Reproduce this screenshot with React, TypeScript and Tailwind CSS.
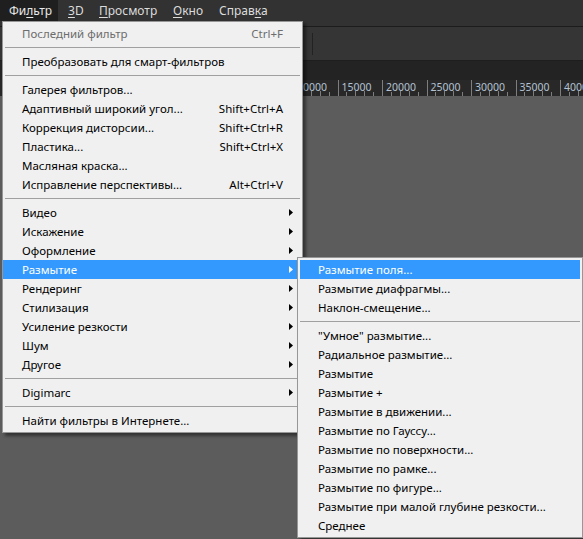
import React from "react";

type Item =
  | { type: "sep" }
  | { type: "item"; label: string; shortcut?: string; sub?: boolean; disabled?: boolean; active?: boolean };

const mainItems: Item[] = [
  { type: "item", label: "Последний фильтр", shortcut: "Ctrl+F", disabled: true },
  { type: "sep" },
  { type: "item", label: "Преобразовать для смарт-фильтров" },
  { type: "sep" },
  { type: "item", label: "Галерея фильтров..." },
  { type: "item", label: "Адаптивный широкий угол...", shortcut: "Shift+Ctrl+A" },
  { type: "item", label: "Коррекция дисторсии...", shortcut: "Shift+Ctrl+R" },
  { type: "item", label: "Пластика...", shortcut: "Shift+Ctrl+X" },
  { type: "item", label: "Масляная краска..." },
  { type: "item", label: "Исправление перспективы...", shortcut: "Alt+Ctrl+V" },
  { type: "sep" },
  { type: "item", label: "Видео", sub: true },
  { type: "item", label: "Искажение", sub: true },
  { type: "item", label: "Оформление", sub: true },
  { type: "item", label: "Размытие", sub: true, active: true },
  { type: "item", label: "Рендеринг", sub: true },
  { type: "item", label: "Стилизация", sub: true },
  { type: "item", label: "Усиление резкости", sub: true },
  { type: "item", label: "Шум", sub: true },
  { type: "item", label: "Другое", sub: true },
  { type: "sep" },
  { type: "item", label: "Digimarc", sub: true },
  { type: "sep" },
  { type: "item", label: "Найти фильтры в Интернете..." },
];

const subItems: Item[] = [
  { type: "item", label: "Размытие поля...", active: true },
  { type: "item", label: "Размытие диафрагмы..." },
  { type: "item", label: "Наклон-смещение..." },
  { type: "sep" },
  { type: "item", label: "\"Умное\" размытие..." },
  { type: "item", label: "Радиальное размытие..." },
  { type: "item", label: "Размытие" },
  { type: "item", label: "Размытие +" },
  { type: "item", label: "Размытие в движении..." },
  { type: "item", label: "Размытие по Гауссу..." },
  { type: "item", label: "Размытие по поверхности..." },
  { type: "item", label: "Размытие по рамке..." },
  { type: "item", label: "Размытие по фигуре..." },
  { type: "item", label: "Размытие при малой глубине резкости..." },
  { type: "item", label: "Среднее" },
];

function Arrow({ white }: { white?: boolean }) {
  return (
    <svg width="4" height="7" viewBox="0 0 4 7" className="block">
      <path d="M0 0 L4 3.5 L0 7 Z" fill={white ? "#ffffff" : "#000000"} />
    </svg>
  );
}

function MenuRows({ items, sub }: { items: Item[]; sub?: boolean }) {
  return (
    <>
      {items.map((it, i) => {
        if (it.type === "sep") {
          return (
            <div key={i} className="h-[9px] flex items-center px-[2px]">
              <div className="h-px w-full bg-[#a0a0a0]" />
            </div>
          );
        }
        const color = it.active ? "text-white" : it.disabled ? "text-[#6d6d6d]" : "text-[#000000]";
        return (
          <div
            key={i}
            className={`h-[19px] flex items-center ${sub ? "mx-[2px] pl-[18px] pr-[3px]" : "pl-[19px] pr-[8px]"} ${
              it.active ? "bg-[#3399ff]" : ""
            } ${color}`}
          >
            <span className="flex-1 whitespace-nowrap">{it.label}</span>
            {it.shortcut && <span className="whitespace-nowrap mr-[11px]">{it.shortcut}</span>}
            {it.sub && (
              <span className="w-[4px] mr-[1px]">
                <Arrow white={it.active} />
              </span>
            )}
          </div>
        );
      })}
    </>
  );
}

function Ruler() {
  const majors = [
    { x: 293, label: "10000" },
    { x: 337.5, label: "15000" },
    { x: 382, label: "20000" },
    { x: 426.5, label: "25000" },
    { x: 471, label: "30000" },
    { x: 515.5, label: "35000" },
    { x: 560, label: "4000" },
  ];
  const step = 44.5;
  return (
    <svg width="583" height="16" className="block">
      <rect width="583" height="16" fill="#282828" />
      {majors.map((m, i) => (
        <g key={i}>
          <line x1={Math.round(m.x) + 0.5} y1={0} x2={Math.round(m.x) + 0.5} y2={16} stroke="#7e7e7e" strokeWidth={1} />
          {[1, 2, 3, 4].map((k) => {
            const x = Math.round(m.x + (step * k) / 5) + 0.5;
            return <line key={k} x1={x} y1={k === 2 || k === 3 ? 11 : 12} x2={x} y2={16} stroke="#7e7e7e" strokeWidth={1} />;
          })}
          <text
            x={m.x + 4}
            y={10.5}
            fill="#b4c2d2"
            fontSize="10.5"
            fontFamily="'Noto Sans', 'Open Sans', sans-serif"
          >
            {m.label}
          </text>
        </g>
      ))}
    </svg>
  );
}

export default function App() {
  const font = { fontFamily: "'Noto Sans', 'Open Sans', sans-serif" };
  return (
    <div
      className="relative w-[583px] h-[539px] overflow-hidden bg-[#5c5c5c] text-[11.5px] leading-none"
      style={font}
    >
      {/* Top menu bar */}
      <div className="h-[27px] bg-[#323232] border-b border-[#1c1c1c]">
        <div className="flex h-[21px] items-center text-[#dcdcdc] text-[12px]">
          <div className="w-[58px] h-full flex items-center pl-[9px] bg-[#1f1f1f] text-[#e8e8e8]">
            Фи<span className="underline underline-offset-2">л</span>ьтр
          </div>
          <div className="w-[31px] h-full flex items-center pl-[10px]">
            <span className="underline underline-offset-2">3</span>D
          </div>
          <div className="w-[74px] h-full flex items-center pl-[10px]">
            <span className="underline underline-offset-2">П</span>росмотр
          </div>
          <div className="w-[46px] h-full flex items-center pl-[10px]">
            <span className="underline underline-offset-2">О</span>кно
          </div>
          <div className="h-full flex items-center pl-[10px]">
            Справ<span className="underline underline-offset-2">к</span>а
          </div>
        </div>
      </div>
      {/* Options bar */}
      <div className="h-[34px] bg-[#353535] border-b border-[#1e1e1e] flex items-center">
        <div className="ml-[312px] w-px h-[22px] bg-[#222222]" />
      </div>
      {/* Tab band */}
      <div className="h-[19px] bg-[#232323]" />
      {/* Ruler */}
      <Ruler />

      {/* Main dropdown */}
      <div className="absolute left-[2px] top-[21px] w-[301px] bg-[#f0f0f0] border border-[#979797] py-[2px] shadow-[3px_3px_3px_rgba(0,0,0,0.45)]">
        <MenuRows items={mainItems} />
      </div>

      {/* Submenu */}
      <div className="absolute left-[297px] top-[257px] w-[286px] bg-[#f0f0f0] border border-[#979797] py-[2px] shadow-[3px_3px_3px_rgba(0,0,0,0.45)]">
        <MenuRows items={subItems} sub />
      </div>
    </div>
  );
}
